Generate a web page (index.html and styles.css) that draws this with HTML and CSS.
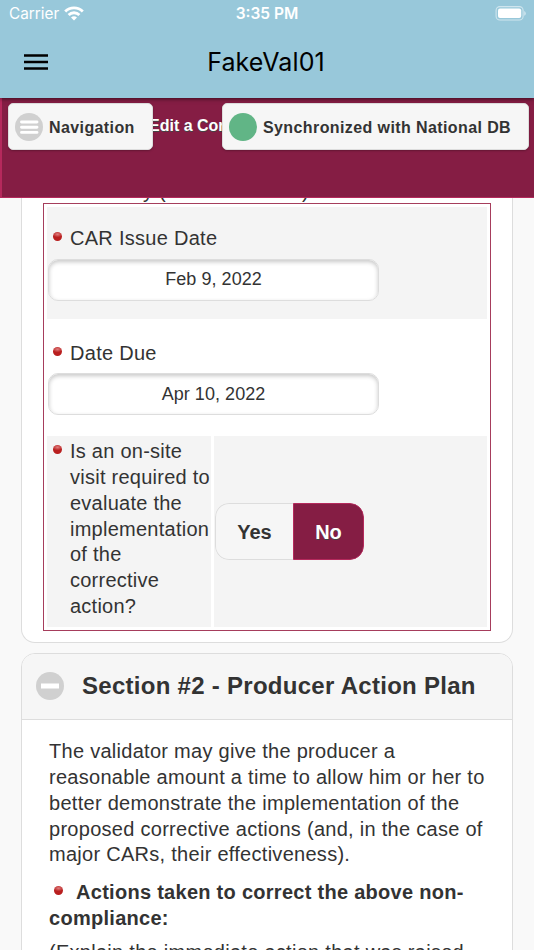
FILE: index.html
```html
<!DOCTYPE html>
<html lang="en">
<head>
<meta charset="utf-8">
<title>FakeVal01</title>
<link rel="stylesheet" href="styles.css">
</head>
<body>
<div class="screen">
  <header class="app-bar">
    <div class="status">
      <div class="carrier"><span class="carrier-name">Carrier</span>
        <svg class="wifi" viewBox="0 0 20 15" width="20" height="15"><g fill="none" stroke="#fff" stroke-width="2.8"><path d="M1.2 5.6a12.4 12.4 0 0 1 17.6 0"/><path d="M4.6 9a7.6 7.6 0 0 1 10.8 0"/></g><path d="M10 14.6l-3-3a4.3 4.3 0 0 1 6 0z" fill="#fff"/></svg>
      </div>
      <span class="clock">3:35 PM</span>
      <svg class="battery" viewBox="0 0 32 15" width="32" height="15"><rect x="2.1" y=".6" width="27" height="13.4" rx="3.8" fill="none" stroke="#cfe5ee" stroke-width="1.1"/><rect x="4" y="2.5" width="23.2" height="9.6" rx="2" fill="#fff"/><path d="M30.2 5v4.8q1.600-.7 1.600-2.400T30.200 5z" fill="#cfe5ee"/></svg>
    </div>
    <div class="title-row">
      <svg class="menu" viewBox="0 0 24 16" width="24" height="16"><path d="M0 1.400h24M0 8h24M0 14.600h24" stroke="#000" stroke-width="2.500"/></svg>
      <h1 class="app-title">FakeVal01</h1>
    </div>
  </header>
  <nav class="page-header">
    <a class="bar-button nav-button"><svg viewBox="0 0 28 28" width="28" height="28"><circle cx="14" cy="14" r="14" fill="#d0d0d0"/><path d="M6.500 9h15.500M6.500 14.200h15.500M6.500 19.400h15.500" stroke="#fff" stroke-width="2.900" stroke-linecap="round"/></svg><span class="bar-text">Navigation</span></a>
    <span class="page-title"><span class="page-title-text">Edit a Corrective</span></span>
    <a class="bar-button sync-button"><span class="sync-dot"></span><span class="bar-text">Synchronized with National DB</span></a>
  </nav>
  <main class="content">
    <section class="card card-first">
      <div class="cut-line"><span class="cut-text">Accuracy (within 12 Years)</span></div>
      <div class="form-table">
        <div class="field shaded">
          <div class="label"><i class="required"></i><span>CAR Issue Date</span></div>
          <div class="date"><span>Feb 9, 2022</span></div>
        </div>
        <div class="field">
          <div class="label"><i class="required"></i><span>Date Due</span></div>
          <div class="date"><span>Apr 10, 2022</span></div>
        </div>
        <div class="question">
          <div class="q-label"><i class="required"></i><span>Is an on-site<br>visit required to<br>evaluate the<br>implementation<br>of the<br>corrective<br>action?</span></div>
          <div class="q-value"><div class="toggle"><span class="yes">Yes</span><span class="no">No</span></div></div>
        </div>
      </div>
    </section>
    <section class="card">
      <div class="card-head"><svg viewBox="0 0 28 28" width="28" height="28"><circle cx="14" cy="14" r="14" fill="#d0d0d0"/><path d="M5 14h18" stroke="#fff" stroke-width="5"/></svg><h2>Section #2 - Producer Action Plan</h2></div>
      <div class="card-body">
        <p>The validator may give the producer a<br>reasonable amount a time to allow him or her to<br>better demonstrate the implementation of the<br>proposed corrective actions (and, in the case of<br>major CARs, their effectiveness).</p>
        <p class="strong"><i class="required inline"></i>Actions taken to correct the above non-<br>compliance:</p>
        <p>(Explain the immediate action that was raised</p>
      </div>
    </section>
  </main>
</div>
</body>
</html>
```
FILE: styles.css
```css
* { box-sizing: border-box; }
body { margin: 0; font-family: "Liberation Sans", Arial, sans-serif; font-size: 20px; line-height: 25.85px; color: #333; letter-spacing: .28px; }
.screen { width: 534px; height: 950px; overflow: hidden; display: flex; flex-direction: column; background: #f9f9f9; }
.app-bar { height: 98px; flex: none; background: #98c8da; box-shadow: 0 1px 4px rgba(0,0,0,.55); position: relative; z-index: 2; font-family: Inter, sans-serif; letter-spacing: 0; }
.status { height: 28px; padding: 0 8px 0 9px; display: grid; grid-template-columns: 1fr auto 1fr; align-items: center; color: #fff; font-size: 15.5px; line-height: 28px; }
.carrier { display: flex; align-items: center; gap: 5px; }
.carrier-name { font-size: 15.3px; }
.wifi { margin-top: -2px; }
.clock { font-weight: 600; margin-left: -1px; }
.battery { justify-self: end; margin-top: -1px; }
.title-row { height: 68px; display: grid; grid-template-columns: 1fr auto 1fr; align-items: center; padding: 0 24px; }
.app-title { margin: 0 2px 0 0; font-size: 25px; font-weight: 400; color: #000; line-height: 30px; letter-spacing: .1px; }
.page-header { height: 100px; flex: none; background: #851d44; border: solid #b5295c; border-width: 0 0 1px 2px; display: flex; align-items: flex-start; padding: 5px 5px 0 6px; font-weight: 700; color: #333; }
.bar-button { height: 47px; flex: none; display: flex; align-items: center; background: #f6f6f6; border: 1px solid #ddd; border-radius: 5px; padding-left: 6px; font-size: 16px; letter-spacing: .4px; box-shadow: 0 1px 2px rgba(0,0,0,.25); white-space: nowrap; gap: 6px; }
.bar-text { padding-top: 2px; }
.nav-button { width: 145px; }
.sync-button { width: 307px; }
.sync-dot { width: 28px; height: 28px; border-radius: 50%; background: #61b586; }
.page-title { flex: 1; height: 47px; overflow: hidden; display: flex; align-items: center; color: #fff; font-size: 16px; letter-spacing: 0; white-space: nowrap; text-shadow: 0 1px 0 #444; padding-bottom: 1px; }
.page-title-text { margin-left: -4px; }
.content { flex: 1; min-height: 0; overflow: hidden; padding: 0 21px; }
.card { border: 1px solid #ddd; border-radius: 14px; background: #fff; overflow: hidden; }
.card-first { border-top: 0; border-radius: 0 0 14px 14px; padding: 0 21px 11px; margin-bottom: 10px; }
.cut-line { height: 5px; display: flex; align-items: flex-end; padding-left: 27px; overflow: hidden; }
.cut-text { line-height: 24px; white-space: nowrap; letter-spacing: .12px; }
.form-table { border: 1px solid #a63d5c; padding: 3px; }
.field { height: 112px; padding: 19px 1px 0; }
.field + .field { height: 117px; padding-top: 22px; }
.field + .field .date { margin-top: 6px; line-height: 40px; }
.shaded { background: #f4f4f4; }
.label, .q-label { display: flex; align-items: flex-start; white-space: nowrap; }
.required { flex: none; width: 9px; height: 9px; border-radius: 50%; margin: 6px 8px 0 5px; background: radial-gradient(ellipse 5px 3px at 50% 25%, #e08080, transparent), #b91f1f; }
.date { width: 331px; height: 42px; margin-top: 7px; border: 1px solid #ddd; border-radius: 10px; background: #fff; box-shadow: inset 0 2px 4px rgba(0,0,0,.22); font-size: 18px; line-height: 38px; text-align: center; letter-spacing: .05px; }
.question { display: grid; grid-template-columns: 164px 1fr; gap: 3px; height: 191px; }
.q-label, .q-value { background: #f4f4f4; }
.q-label { padding: 3px 0 0 1px; letter-spacing: .25px; }
.q-value { display: flex; align-items: center; padding-left: 1px; }
.toggle { display: flex; width: 149px; height: 57px; border-radius: 14px; overflow: hidden; font-weight: 700; line-height: 56px; text-align: center; letter-spacing: 0; }
.yes { width: 78px; border: 1px solid #ddd; border-right: 0; border-radius: 14px 0 0 14px; background: #f6f6f6; }
.no { width: 71px; background: #851d44; color: #fff; border: 1px solid #b5295c; border-radius: 0 14px 14px 0; text-shadow: 0 1px 0 #444; }
.card-head { height: 66px; display: flex; align-items: center; gap: 18px; padding: 0 0 1px 14px; background: #f6f6f6; border-bottom: 1px solid #ddd; }
.card-head h2 { margin: 0; font-size: 24px; line-height: 30px; white-space: nowrap; }
.card-body { padding: 19px 27px; white-space: nowrap; }
.card-body p { margin: 0 0 12px; }
.card-body .strong { font-weight: 700; margin-bottom: 8px; }
.inline { display: inline-block; vertical-align: 4px; margin: 0 13px 0 5px; }
```
